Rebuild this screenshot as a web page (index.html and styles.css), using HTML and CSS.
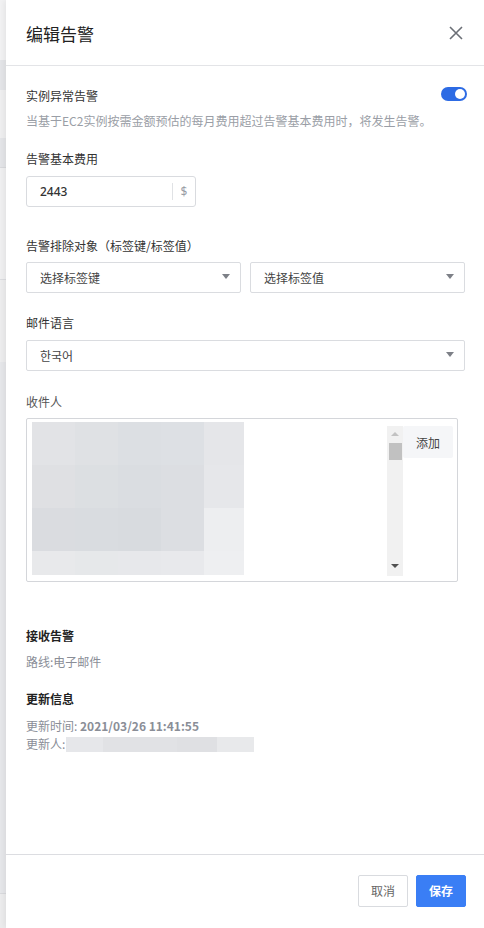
FILE: index.html
```html
<!DOCTYPE html>
<html lang="zh">
<head>
<meta charset="utf-8">
<title>编辑告警</title>
<link rel="stylesheet" href="styles.css">
</head>
<body>
<div class="page">
  <div class="backdrop">
    <div class="bd b1"></div>
    <div class="bd b2"></div>
    <div class="bd b3"></div>
    <div class="bd b4"></div>
    <div class="bd b5"></div>
    <div class="bd b6"></div>
    <div class="bd b7"></div>
    <div class="bd b8"></div>
    <div class="bd b9"></div>
  </div>
  <div class="drawer">
    <div class="header">
      <div class="title">编辑告警</div>
      <svg class="close" width="16" height="16" viewBox="0 0 16 16"><path d="M2 2 L14 14 M14 2 L2 14" stroke="#6b6f76" stroke-width="1.6" fill="none"/></svg>
    </div>
    <div class="body">
      <div class="row-toggle">
        <span class="label">实例异常告警</span>
        <span class="toggle"><span class="knob"></span></span>
      </div>
      <div class="desc">当基于EC2实例按需金额预估的每月费用超过告警基本费用时，将发生告警。</div>

      <div class="label l-cost">告警基本费用</div>
      <div class="input">
        <span class="value">2443</span>
        <span class="sep"></span>
        <span class="unit">$</span>
      </div>

      <div class="label l-exclude">告警排除对象（标签键/标签值）</div>
      <div class="select-pair">
        <div class="select"><span>选择标签键</span><i class="caret"></i></div>
        <div class="select"><span>选择标签值</span><i class="caret"></i></div>
      </div>

      <div class="label l-lang">邮件语言</div>
      <div class="select full"><span>한국어</span><i class="caret"></i></div>

      <div class="label l-recv">收件人</div>
      <div class="recipients">
        <div class="blur">
          <div class="bl" style="background:#e2e3e6"></div><div class="bl" style="background:#dfe1e4"></div><div class="bl" style="background:#dcdfe3"></div><div class="bl" style="background:#dde0e4"></div><div class="bl" style="background:#e5e6e9"></div>
          <div class="bl" style="background:#dfe0e3"></div><div class="bl" style="background:#dcdfe2"></div><div class="bl" style="background:#dadde1"></div><div class="bl" style="background:#dcdee2"></div><div class="bl" style="background:#e6e7ea"></div>
          <div class="bl" style="background:#dadce0"></div><div class="bl" style="background:#d9dce0"></div><div class="bl" style="background:#d8dbdf"></div><div class="bl" style="background:#dcdee2"></div><div class="bl" style="background:#edeef0"></div>
          <div class="bl" style="background:#e8e9eb"></div><div class="bl" style="background:#e6e8ea"></div><div class="bl" style="background:#e7e8eb"></div><div class="bl" style="background:#e8e9ec"></div><div class="bl" style="background:#eeeff1"></div>
        </div>
        <div class="scrollbar">
          <i class="up"></i>
          <div class="thumb"></div>
          <i class="down"></i>
        </div>
        <div class="add">添加</div>
      </div>

      <div class="label strong l-receive">接收告警</div>
      <div class="info l-route">路线:电子邮件</div>

      <div class="label strong l-update">更新信息</div>
      <div class="info l-time">更新时间: <b>2021/03/26 11:41:55</b></div>
      <div class="info l-user">更新人:<span class="ublur"><i style="background:#e6e7ea"></i><i style="background:#e1e2e5"></i><i style="background:#dfe0e3"></i><i style="background:#e8e9eb"></i></span></div>
    </div>
    <div class="footer">
      <button class="btn cancel">取消</button>
      <button class="btn save">保存</button>
    </div>
  </div>
</div>
</body>
</html>
```

FILE: styles.css
```css
* { box-sizing: border-box; }
html, body { margin: 0; padding: 0; }
body {
  font-family: "Noto Sans", "Noto Sans CJK SC", sans-serif;
  color: #333;
  font-size: 12px;
  background: #fff;
}
.page {
  display: flex;
  width: 484px;
  height: 928px;
  overflow: hidden;
}
.backdrop {
  width: 6px;
  flex: none;
  display: flex;
  flex-direction: column;
  background: #e6e7ea;
}
.bd { flex: none; }
.b1 { height: 60px; background: #f2f2f3; }
.b2 { height: 30px; background: #e4e5e8; }
.b3 { height: 48px; background: #efeff0; }
.b4 { height: 30px; background: #e4e5e8; border-bottom: 1px solid #d9dadd; }
.b5 { height: 112px; background: #f0f0f1; border-bottom: 1px solid #dcdde0; }
.b6 { height: 82px; background: #ededee; }
.b7 { height: 532px; background: #e6e7ea; border-bottom: 1px solid #d9dadd; }
.b8 { height: 33px; background: #ececed; }
.b9 { flex: 1; background: #ececed; }

.drawer {
  flex: 1;
  display: flex;
  flex-direction: column;
  background: #fff;
  box-shadow: -2px 0 6px rgba(0, 0, 0, 0.06);
  position: relative;
}
.header {
  height: 66px;
  flex: none;
  display: flex;
  align-items: center;
  justify-content: space-between;
  padding: 0 20px 0 20px;
  border-bottom: 1px solid #e3e4e7;
}
.title {
  font-family: "Noto Sans CJK SC", sans-serif;
  font-size: 17px;
  line-height: 24px;
  color: #222;
  margin-top: 2px;
}
.close { margin-right: 0; margin-top: 1px; }

.body {
  flex: 1;
  padding: 20px 19px 0 20px;
  display: flex;
  flex-direction: column;
}
.label {
  font-family: "Noto Sans CJK SC", sans-serif;
  font-size: 12px;
  line-height: 18px;
  color: #333;
}
.row-toggle {
  display: flex;
  justify-content: space-between;
  align-items: center;
  height: 20px;
}
.toggle {
  width: 26px;
  height: 14px;
  border-radius: 7px;
  background: #2d6be4;
  position: relative;
  margin-right: -2px;
  margin-top: -4px;
}
.knob {
  position: absolute;
  right: 2px;
  top: 2px;
  width: 10px;
  height: 10px;
  border-radius: 50%;
  background: #fff;
}
.desc {
  font-family: "Noto Sans CJK SC", sans-serif;
  font-size: 12px;
  line-height: 18px;
  color: #9a9ea6;
  margin-top: 6px;
  white-space: nowrap;
}
.l-cost { margin-top: 20px; }
.input {
  margin-top: 8px;
  width: 170px;
  height: 31px;
  border: 1px solid #d9dbdf;
  border-radius: 3px;
  display: flex;
  align-items: center;
  padding: 0 0 0 13px;
}
.input .value {
  flex: 1;
  font-size: 12px;
  color: #333;
  font-weight: 500;
}
.input .sep {
  width: 1px;
  height: 17px;
  background: #e0e2e5;
}
.input .unit {
  width: 22px;
  text-align: center;
  color: #9a9ea6;
  font-size: 12px;
}
.l-exclude { margin-top: 30px; }
.select-pair {
  margin-top: 7px;
  display: flex;
  gap: 9px;
}
.select {
  flex: 1;
  height: 31px;
  border: 1px solid #dadce0;
  border-radius: 2px;
  display: flex;
  align-items: center;
  justify-content: space-between;
  padding: 0 10px 0 13px;
  font-family: "Noto Sans CJK SC", sans-serif;
  font-size: 12px;
  color: #444;
}
.select.full { flex: none; margin-top: 8px; }
.caret {
  width: 0;
  height: 0;
  border-left: 4.5px solid transparent;
  border-right: 4.5px solid transparent;
  border-top: 5px solid #7d8087;
  margin-top: -2px;
}
.l-lang { margin-top: 21px; }
.l-recv { margin-top: 22px; color: #555; }
.recipients {
  margin-top: 7px;
  width: 432px;
  height: 164px;
  border: 1px solid #d4d6da;
  border-radius: 2px;
  display: flex;
  padding: 2px 4px 4px 5px;
  position: relative;
}
.blur {
  width: 212px;
  height: 156px;
  display: grid;
  grid-template-columns: 43px 43px 43px 43px 40px;
  grid-template-rows: 43px 43px 43px 24px;
  margin-top: 1px;
}
.scrollbar {
  margin-left: 143px;
  margin-top: 5px;
  width: 16px;
  height: 150px;
  background: #f1f1f1;
  position: relative;
}
.scrollbar .up {
  position: absolute;
  left: 4px;
  top: 6px;
  width: 0; height: 0;
  border-left: 4px solid transparent;
  border-right: 4px solid transparent;
  border-bottom: 4px solid #c2c2c2;
}
.scrollbar .thumb {
  position: absolute;
  left: 2px;
  top: 17px;
  width: 13px;
  height: 17px;
  background: #c1c1c1;
}
.scrollbar .down {
  position: absolute;
  left: 4px;
  bottom: 8px;
  width: 0; height: 0;
  border-left: 4px solid transparent;
  border-right: 4px solid transparent;
  border-top: 4px solid #505050;
}
.add {
  margin-top: 5px;
  width: 50px;
  height: 32px;
  background: #f5f6f8;
  border-radius: 2px;
  display: flex;
  align-items: center;
  justify-content: center;
  font-family: "Noto Sans CJK SC", sans-serif;
  font-size: 12px;
  color: #444;
}
.strong { font-weight: 600; color: #222; }
.l-receive { margin-top: 45px; }
.info {
  font-family: "Noto Sans CJK SC", sans-serif;
  font-size: 12px;
  line-height: 18px;
  color: #8a8e97;
}
.info b { font-weight: 600; }
.l-route { margin-top: 8px; }
.l-update { margin-top: 19px; }
.l-time { margin-top: 9px; }
.l-user { display: flex; align-items: center; }
.ublur {
  display: flex;
  height: 15px;
  margin-left: 1px;
}
.ublur i { display: block; width: 37px; height: 15px; }
.ublur i:nth-child(2) { width: 74px; }
.ublur i:nth-child(3) { width: 40px; }

.footer {
  flex: none;
  height: 74px;
  border-top: 1px solid #dcdde1;
  display: flex;
  justify-content: flex-end;
  align-items: center;
  gap: 8px;
  padding: 0 18px 2px 0;
}
.btn {
  width: 50px;
  height: 32px;
  border-radius: 2px;
  font-family: "Noto Sans CJK SC", sans-serif;
  font-size: 12px;
  padding: 0;
  cursor: pointer;
}
.cancel {
  background: #fff;
  border: 1px solid #d9dbdf;
  color: #666;
}
.save {
  background: #3a7ef5;
  border: 1px solid #3a7ef5;
  color: #fff;
  font-weight: 600;
}
```
